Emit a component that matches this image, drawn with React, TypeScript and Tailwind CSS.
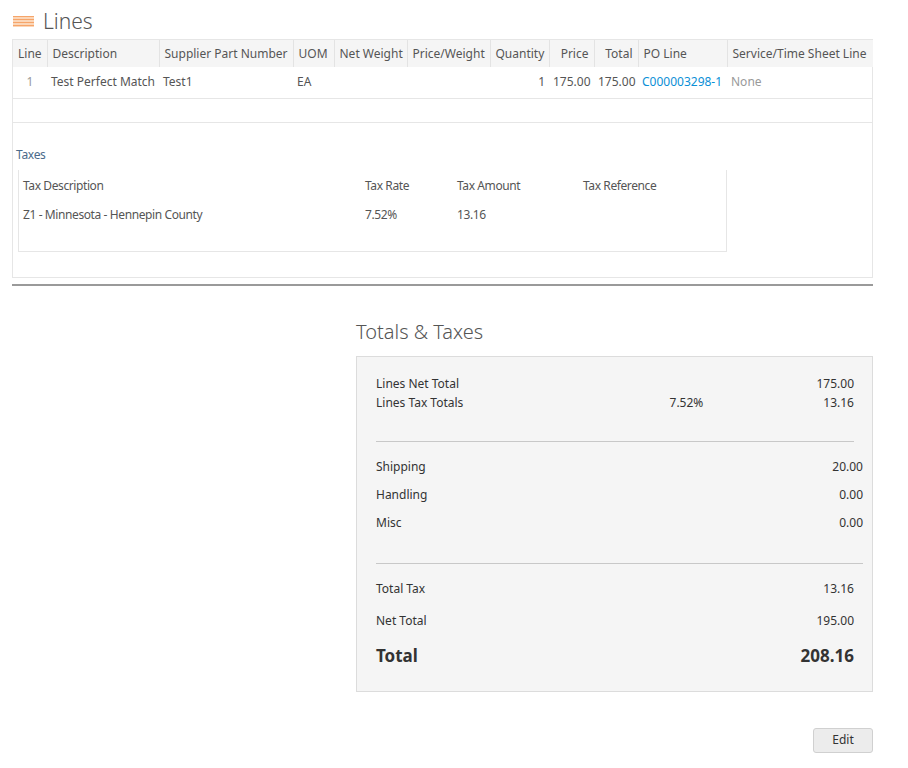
const cols = [
  { h: "Line", w: 34, a: "text-center" },
  { h: "Description", w: 112, a: "text-left" },
  { h: "Supplier Part Number", w: 134, a: "text-left" },
  { h: "UOM", w: 41, a: "text-left" },
  { h: "Net Weight", w: 73, a: "text-left" },
  { h: "Price/Weight", w: 83, a: "text-left" },
  { h: "Quantity", w: 59, a: "text-right" },
  { h: "Price", w: 45, a: "text-right" },
  { h: "Total", w: 44, a: "text-right" },
  { h: "PO Line", w: 89, a: "text-left" },
  { h: "Service/Time Sheet Line", w: 146, a: "text-left" },
];

const row = ["1", "Test Perfect Match", "Test1", "EA", "", "", "1", "175.00", "175.00", "C000003298-1", "None"];

function Amount({ label, rate, value, className = "" }: { label: string; rate?: string; value: string; className?: string }) {
  return (
    <div className={`flex items-center ${className}`}>
      <span className="flex-1">{label}</span>
      {rate && <span className="w-[60px] mr-[120px] text-right">{rate}</span>}
      <span className="text-right">{value}</span>
    </div>
  );
}

export default function App() {
  return (
    <div className="bg-white w-[908px] h-[768px] text-[#333] font-['Open_Sans',sans-serif] pl-[12px] pr-[35px] pt-[8px]">
      <div className="flex items-center gap-[9px] pl-[1px] h-[26px]">
        <div className="w-[21px] h-[11px] flex flex-col justify-between bg-[#fbd6b8]">
          <div className="h-px bg-[#f6a56a]" />
          <div className="h-px bg-[#f6a56a]" />
          <div className="h-px bg-[#f6a56a]" />
          <div className="h-px bg-[#f6a56a]" />
        </div>
        <h1 className="text-[21px] font-light text-[#555] leading-none">Lines</h1>
      </div>

      <div className="mt-[5px] border border-[#e6e6e6]">
        <table className="w-full border-collapse text-[12px] text-[#555] table-fixed">
          <colgroup>
            {cols.map((c) => <col key={c.h} style={{ width: c.w }} />)}
          </colgroup>
          <thead>
            <tr className="bg-[#f5f5f5] h-[27px]">
              {cols.map((c, i) => (
                <th key={c.h} className={`font-normal px-[5px] whitespace-nowrap ${c.a} ${i > 0 ? "border-l border-[#e3e3e3]" : ""}`}>{c.h}</th>
              ))}
            </tr>
          </thead>
          <tbody>
            <tr className="h-[31px] border-b border-[#e6e6e6]">
              {row.map((v, i) => (
                <td key={i} className={`px-[4px] whitespace-nowrap ${cols[i].a} ${i === 9 ? "text-[#0b8fd6]" : ""} ${i === 10 || i === 0 ? "text-[#999]" : ""}`}>{v}</td>
              ))}
            </tr>
            <tr className="h-[24px] border-b border-[#e6e6e6]"><td colSpan={11} /></tr>
          </tbody>
        </table>
        <div className="px-[3px] pt-[23px] pb-[25px]">
          <div className="text-[12px] text-[#4a6a8a] tracking-[-0.3px]">Taxes</div>
          <div className="mt-[6px] w-[709px] ml-[2px] border-l border-r border-b border-[#e6e6e6] text-[12px] text-[#555] tracking-[-0.4px] pb-[22px]">
            <div className="flex h-[31px] items-center pt-[2px] px-[4px]">
              <span className="w-[342px]">Tax Description</span>
              <span className="w-[92px]">Tax Rate</span>
              <span className="w-[126px]">Tax Amount</span>
              <span>Tax Reference</span>
            </div>
            <div className="flex h-[28px] items-center px-[4px]">
              <span className="w-[342px]">Z1 - Minnesota - Hennepin County</span>
              <span className="w-[92px]">7.52%</span>
              <span className="w-[126px]">13.16</span>
            </div>
          </div>
        </div>
      </div>
      <div className="mt-[6px] h-[2px] bg-[#9a9a9a]" />

      <div className="ml-[344px] mt-[36px]">
        <h2 className="text-[20px] font-light text-[#555] leading-none">Totals &amp; Taxes</h2>
        <div className="mt-[14px] h-[336px] border border-[#dcdcdc] bg-[#f5f5f5] font-['Liberation_Sans',sans-serif] text-[12px] text-[#333] pl-[19px] pr-[9px] pt-[18px]">
          <div className="pr-[9px]">
            <Amount label="Lines Net Total" value="175.00" className="h-[19px]" />
            <Amount label="Lines Tax Totals" rate="7.52%" value="13.16" className="h-[19px]" />
            <div className="mt-[28px] h-px bg-[#c8c8c8]" />
          </div>
          <Amount label="Shipping" value="20.00" className="h-[28px] mt-[11px]" />
          <Amount label="Handling" value="0.00" className="h-[28px]" />
          <Amount label="Misc" value="0.00" className="h-[28px]" />
          <div className="mt-[26px] h-px bg-[#c8c8c8]" />
          <div className="pr-[9px]">
            <Amount label="Total Tax" value="13.16" className="h-[28px] mt-[11px]" />
            <Amount label="Net Total" value="195.00" className="h-[28px] mt-[4px]" />
            <Amount label="Total" value="208.16" className="h-[30px] mt-[6px] text-[17px] font-bold" />
          </div>
        </div>
        <div className="flex justify-end mt-[36px]">
          <button className="w-[60px] h-[25px] rounded-[3px] border border-[#d0d0d0] bg-[#ececec] text-[12px] text-[#333] font-['Liberation_Sans',sans-serif]">Edit</button>
        </div>
      </div>
    </div>
  );
}
